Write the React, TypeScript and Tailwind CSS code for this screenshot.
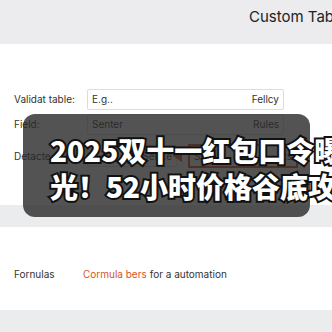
import React from "react";

function FormRow({ label, left, right, top }: { label: string; left: string; right: string; top: string }) {
  return (
    <div className={`flex items-center ${top}`}>
      <span className="w-[73px] text-[10px] text-[#333]">{label}</span>
      <div className="flex h-[21px] w-[197px] items-center justify-between rounded-[2px] border border-[#dcdcdc] bg-white px-[4px] text-[10px] text-[#333]">
        <span>{left}</span>
        <span>{right}</span>
      </div>
    </div>
  );
}

export default function App() {
  return (
    <div className="relative h-[332px] w-[332px] overflow-hidden bg-white font-['Inter','Liberation_Sans',sans-serif]">
      <div className="h-[44px] overflow-hidden whitespace-nowrap bg-[#ececee] pl-[249px] pt-[8px] text-[15px] leading-[18px] text-[#222]">
        Custom Table
      </div>

      <div className="flex h-[161px] flex-col px-[14px] pt-[45px]">
        <FormRow label="Validat table:" left="E.g.." right="Fellcy" top="" />
        <FormRow label="Field:" left="Senter" right="Rules" top="mt-[4px]" />
        <div className="mt-[9px] flex items-center">
          <span className="w-[73px] text-[10px] text-[#333]">Detacte:</span>
          <div className="flex h-[22px] w-[90px] items-center justify-end rounded-[2px] border border-[#dcdcdc] px-[4px] text-[10px] text-[#333]">
            Sence
          </div>
          <div className="ml-[-4px] h-0 w-0 border-y-[6px] border-r-[9px] border-y-transparent border-r-[#d9531e]" />
          <div className="ml-[6px] flex h-[24px] w-[110px] items-center justify-between border-2 border-[#d9531e] px-[4px] text-[10px] text-[#333]">
            <span>Se</span>
            <span>ts</span>
          </div>
        </div>
      </div>

      <div className="h-[22px] bg-[#ebecee]" />

      <div className="flex h-[83px] items-center px-[14px] pt-[12px] text-[10px]">
        <span className="w-[69px] text-[#333]">Fornulas</span>
        <span className="text-[#d9531e]">Cormula bers</span>
        <span className="ml-[3px] text-[#333]">for a automation</span>
      </div>

      <div className="h-[22px] bg-[#ebecee]" />

      <div className="absolute left-[23px] top-[114px] h-[103px] w-[287px] rounded-[12px] bg-[rgba(40,40,40,0.8)] pl-[27px] pt-[18px]">
        <div className="whitespace-nowrap font-['Noto_Sans_CJK_SC',sans-serif] text-[28px] font-black leading-[36px] text-white [-webkit-text-stroke:4px_#111] [paint-order:stroke_fill]">
          <div>2025双十一红包口令曝</div>
          <div>光！52小时价格谷底攻</div>
        </div>
      </div>
    </div>
  );
}
